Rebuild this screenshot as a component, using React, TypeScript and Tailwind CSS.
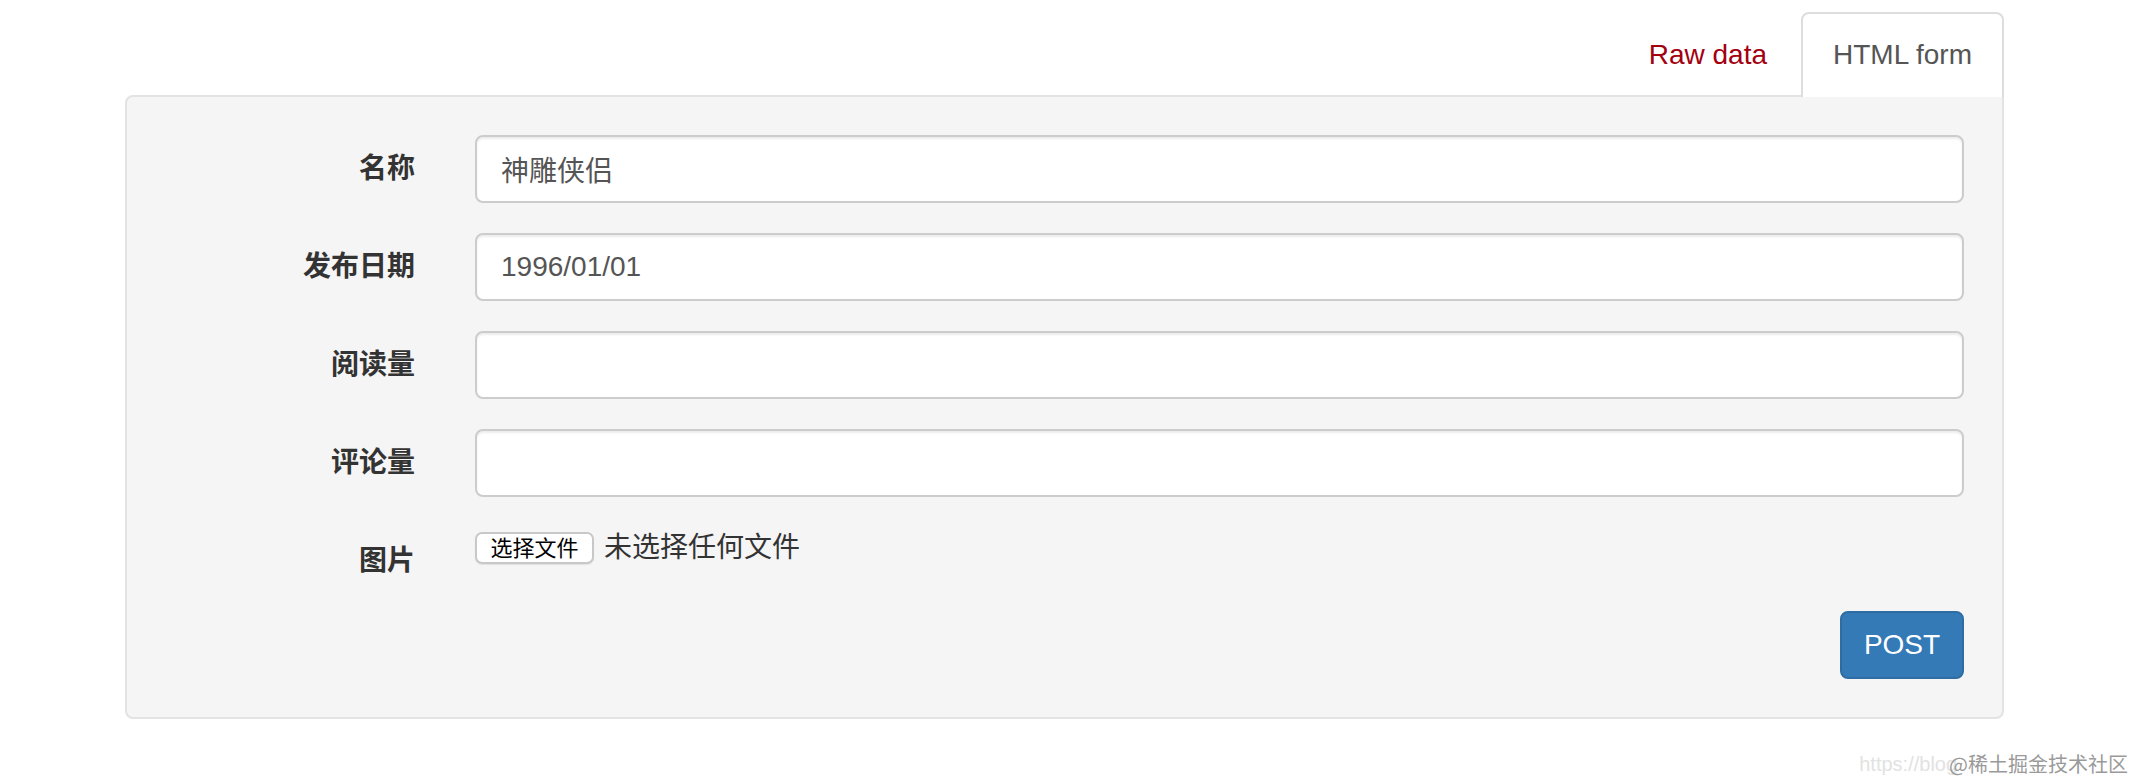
const font = { fontFamily: '"Liberation Sans", "Noto Sans CJK SC", Arial, sans-serif' };

const fields = [
  { label: "名称", value: "神雕侠侣" },
  { label: "发布日期", value: "1996/01/01" },
  { label: "阅读量", value: "" },
  { label: "评论量", value: "" },
];

function Label({ children }: { children: string }) {
  return (
    <label className="w-[250px] shrink-0 pt-[14px] text-right text-[28px] font-bold leading-[40px] text-[#333]">
      {children}
    </label>
  );
}

export default function App() {
  return (
    <div className="relative h-[782px] w-[2136px] overflow-hidden bg-white text-[#333]" style={font}>
      <div className="ml-[125px] w-[1879px] pt-[12px]">
        {/* Tabs */}
        <ul className="flex justify-end">
          <li className="mr-[4px]">
            <span className="block px-[30px] pt-[23px] pb-[20px] text-[28px] leading-[40px] text-[#a30010]">Raw data</span>
          </li>
          <li className="mb-[-2px]">
            <span className="block rounded-t-[8px] border-2 border-b-0 border-[#ddd] bg-white px-[30px] pt-[21px] pb-[22px] text-[28px] leading-[40px] text-[#555]">
              HTML form
            </span>
          </li>
        </ul>

        {/* Well */}
        <div className="rounded-[8px] rounded-tr-none border-2 border-[#e3e3e3] bg-[#f5f5f5] px-[38px] py-[38px]">
          <div className="flex flex-col gap-[30px]">
            {fields.map((f) => (
              <div key={f.label} className="flex gap-[60px]">
                <Label>{f.label}</Label>
                <input
                  readOnly
                  defaultValue={f.value}
                  className="h-[68px] flex-1 rounded-[8px] border-2 border-[#ccc] bg-white px-[24px] text-[28px] text-[#555] shadow-[inset_0_2px_2px_rgba(0,0,0,0.075)] outline-none"
                  style={font}
                />
              </div>
            ))}

            <div className="flex gap-[60px]">
              <Label>图片</Label>
              <div className="flex h-[36px] items-center pt-[6px]">
                <span className="flex h-[32px] w-[119px] items-center justify-center rounded-[7px] border-2 border-[#c8c8c8] bg-white text-[22px] text-black shadow-[0_1px_1px_rgba(0,0,0,0.08)]">
                  选择文件
                </span>
                <span className="ml-[10px] text-[28px] leading-[36px] text-[#333]">未选择任何文件</span>
              </div>
            </div>

            <div className="flex justify-end">
              <button className="h-[68px] w-[124px] rounded-[8px] border-2 border-[#2e6da4] bg-[#337ab7] text-[28px] text-white" style={font}>
                POST
              </button>
            </div>
          </div>
        </div>
      </div>

      {/* Watermark */}
      <div className="absolute right-[8px] bottom-[4px] flex items-center text-[20px] leading-[28px]">
        <span className="text-[#e2e2e2]">https://blog</span>
        <span className="-ml-[8px] text-[#9a9a9a]" style={{ fontFamily: '"Noto Sans CJK SC", sans-serif' }}>
          @稀土掘金技术社区
        </span>
      </div>
    </div>
  );
}
